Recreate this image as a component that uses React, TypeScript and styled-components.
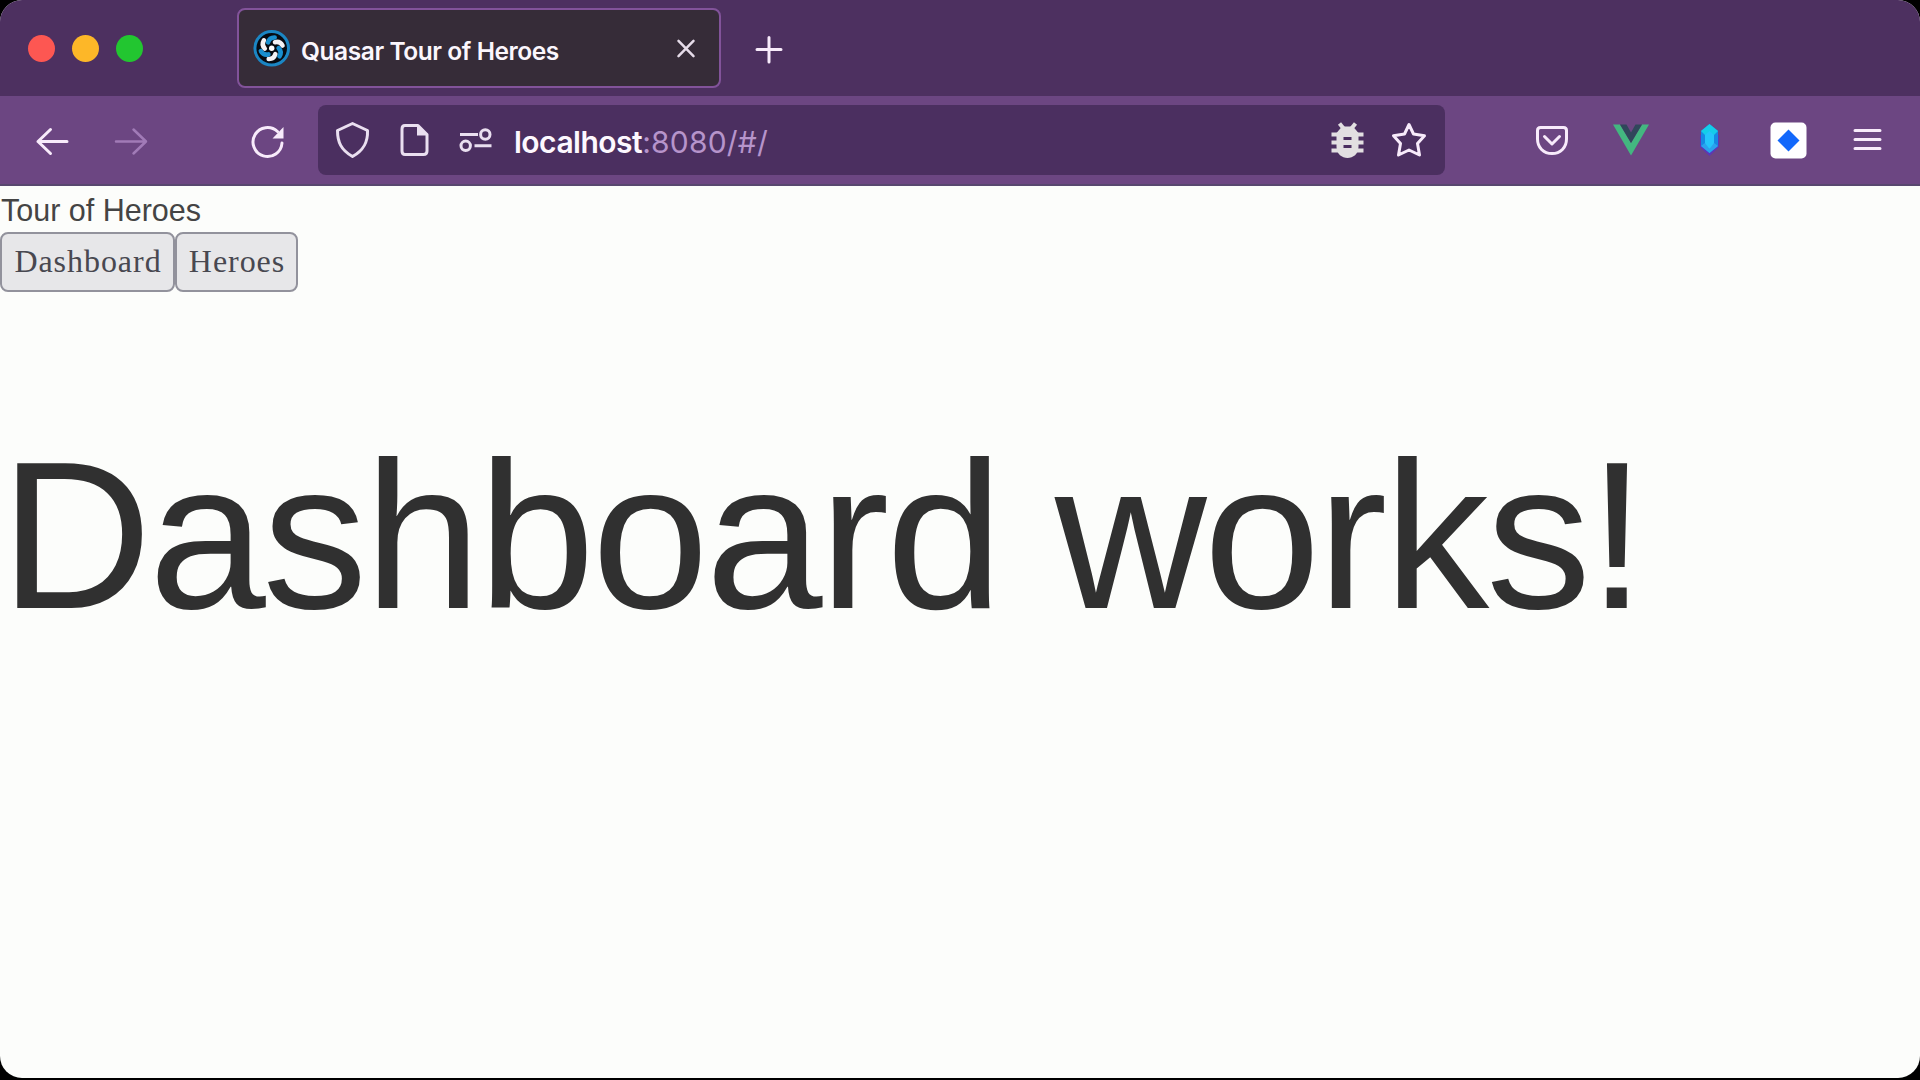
import React from "react";
import styled, { createGlobalStyle } from "styled-components";

const GlobalStyle = createGlobalStyle`
  html, body { margin: 0; padding: 0; background: #000; }
  *, *::before, *::after { box-sizing: border-box; }
`;

const Window = styled.div`
  width: 1920px;
  height: 1078px;
  display: flex;
  flex-direction: column;
  overflow: hidden;
  background: #fcfdfb;
  border-radius: 22px;
  font-family: Inter, "Liberation Sans", sans-serif;
`;

const Page = styled.div`
  height: 1080px;
  overflow: hidden;
  background: #000;
`;

const TabStrip = styled.header`
  flex: none;
  height: 96px;
  display: flex;
  align-items: center;
  padding-left: 28px;
  background: #4d3060;
`;

const Lights = styled.div`
  display: flex;
  gap: 17px;
  width: 209px;
`;

const Light = styled.span<{ $color: string }>`
  width: 27px;
  height: 27px;
  border-radius: 50%;
  background: ${(p) => p.$color};
`;

const Tab = styled.div`
  width: 484px;
  height: 80px;
  display: flex;
  align-items: center;
  padding: 0 13px 0 13px;
  border: 2px solid #82539a;
  border-radius: 8px;
  background: #362c38;
`;

const TabTitle = styled.span`
  flex: 1;
  padding: 5px 0 0 9px;
  color: #fbf6fd;
  font-size: 24.5px;
  font-weight: 600;
  line-height: 34px;
  letter-spacing: -0.43px;
  white-space: nowrap;
`;

const Toolbar = styled.nav`
  flex: none;
  height: 90px;
  display: flex;
  align-items: center;
  border-bottom: 2px solid #58476f;
  background: #6c4682;
`;

const Icon = styled.svg<{ $before?: number; $color?: string }>`
  flex: none;
  width: 40px;
  height: 40px;
  margin-left: ${(p) => p.$before ?? 0}px;
  color: ${(p) => p.$color ?? "#f8ebfb"};
  fill: none;
  stroke: currentColor;
  stroke-width: 3;
  stroke-linecap: round;
  stroke-linejoin: round;
`;

const AddressBar = styled.div`
  width: 1127px;
  height: 70px;
  display: flex;
  align-items: center;
  margin-left: 31px;
  padding-right: 16px;
  border-radius: 8px;
  background: #4b2f60;
`;

const Address = styled.span`
  flex: 1;
  padding: 4px 0 0 18px;
  color: #b694cb;
  font-size: 30px;
  line-height: 40px;
  letter-spacing: 0.2px;
  white-space: nowrap;
`;

const Host = styled.span`
  color: #fdf8ff;
  font-weight: 600;
  letter-spacing: -0.5px;
`;

const Content = styled.main`
  flex: 1;
  display: flex;
  flex-direction: column;
  align-items: flex-start;
  color: #303030;
  font-family: "Liberation Sans", Arial, sans-serif;
`;

const AppTitle = styled.div`
  height: 46px;
  padding: 2px 0 0 1px;
  color: #444;
  font-size: 30.5px;
  line-height: 44px;
`;

const Links = styled.div`
  display: flex;
`;

const LinkButton = styled.button<{ $width: number }>`
  width: ${(p) => p.$width}px;
  height: 60px;
  padding: 0 0 1px 1px;
  border: 2px solid #92929c;
  border-radius: 8px;
  background: #e7e7e9;
  color: #484850;
  font-family: Georgia, "Liberation Serif", serif;
  font-size: 32px;
  letter-spacing: 0.95px;
`;

const Heading = styled.h1`
  margin: 138px 0 0;
  font-size: 210.4px;
  font-weight: 400;
  line-height: 212px;
  letter-spacing: -0.01562em;
  white-space: nowrap;
`;

const blades = [0, 60, 120, 180, 240, 300];

const QuasarLogo = () => (
  <Icon viewBox="0 0 40 40">
    <circle cx="19.700" cy="20.300" r="16.800" fill="#070b12" stroke="#1b86c4" />
    {blades.map((angle, i) => (
      <path
        key={angle}
        d="M23 14.200Q28 13 30.500 17.500"
        transform={`rotate(${angle} 19.700 20.300)`}
        stroke={i % 2 ? "#188fd0" : "#f4f2f5"}
        strokeWidth="4.600"
      />
    ))}
    <circle cx="19.700" cy="20.300" r="2.700" fill="#fff" stroke="none" />
  </Icon>
);

export default function App() {
  return (
    <Page>
      <GlobalStyle />
      <Window>
        <TabStrip>
          <Lights>
            <Light $color="#fd5752" />
            <Light $color="#fdb728" />
            <Light $color="#22c630" />
          </Lights>
          <Tab>
            <QuasarLogo />
            <TabTitle>Quasar Tour of Heroes</TabTitle>
            <Icon viewBox="0 0 40 40" $color="#e6dce9">
              <path d="M12.500 12.800L27.500 28.200M27.500 12.800L12.500 28.200" strokeWidth="2.500" />
            </Icon>
          </Tab>
          <Icon viewBox="0 0 40 40" $before={28}>
            <path d="M20 9.500V34M8 21.500H32" />
          </Icon>
        </TabStrip>
        <Toolbar>
          <Icon viewBox="0 0 40 40" $before={32}>
            <path d="M35 21.500H6M18.500 9.500L6 21.500L18.500 33.500" />
          </Icon>
          <Icon viewBox="0 0 40 40" $before={39} $color="#a17bb7">
            <path d="M5 21.500H34M22.500 9.500L35 21.500L22.500 33.500" strokeWidth="2.500" />
          </Icon>
          <Icon viewBox="0 0 40 40" $before={96}>
            <path d="M35 23A14.500 14.500 0 1 1 30.500 11.500" />
            <path d="M36.500 7V18.500H25.500Z" fill="currentColor" stroke="none" />
          </Icon>
          <AddressBar>
            <Icon viewBox="0 0 40 40" $before={15} $color="#eadff0">
              <path d="M19.500 3.500L34.500 10.500C35 22 31 30 19.500 36.500C8 30 4.500 22 4.500 10.500Z" />
            </Icon>
            <Icon viewBox="0 0 40 40" $before={22} $color="#eadff0">
              <path d="M10 5.500H23L32 14.500V31Q32 34.500 28.500 34.500H10Q7 34.500 7 31V9Q7 5.500 10 5.500Z" />
              <path d="M22 5V15.500H32.500Z" fill="currentColor" stroke="none" />
            </Icon>
            <Icon viewBox="0 0 40 40" $before={21} $color="#eadff0">
              <path d="M4 14.500H22M18.500 25.800H35.500" strokeLinecap="butt" />
              <circle cx="29.300" cy="14.500" r="4.700" />
              <circle cx="9.700" cy="25.800" r="4.700" />
            </Icon>
            <Address>
              <Host>localhost</Host>:8080/#/
            </Address>
            <Icon viewBox="0 0 40 40" $color="#e2dfe1">
              <path d="M11.500 3.500L16 9M27.500 3.500L23 9" strokeLinecap="butt" strokeWidth="4" />
              <path d="M3.500 14.500H35.500M3.500 22.500H35.500M3.500 30.500H35.500" strokeLinecap="butt" strokeWidth="4" />
              <path
                d="M14 6.500H25L30.500 13V27C30.500 34 25 38 19.500 38S8.500 34 8.500 27V13Z"
                fill="currentColor"
                stroke="none"
              />
              <path d="M15.500 18.500H23.500M15.500 26.500H23.500" stroke="#4b2f60" strokeLinecap="butt" />
            </Icon>
            <Icon viewBox="0 0 40 40" $before={21}>
              <path d="M20 4.500L24.500 14L35.500 15.700L28.500 23.500L30.500 35L20 30L9.500 35L11.500 23.500L4.500 15.700L15.500 14Z" />
            </Icon>
          </AddressBar>
          <Icon viewBox="0 0 40 40" $before={87}>
            <path d="M8.500 7.500H31.500Q34.500 7.500 34.500 10.500V19C34.500 27.500 28.500 33.500 20 33.500S5.500 27.500 5.500 19V10.500Q5.500 7.500 8.500 7.500Z" />
            <path d="M12.500 16.500L20 24L27.500 16.500" />
          </Icon>
          <Icon viewBox="0 0 40 40" $before={39}>
            <g stroke="none">
              <path d="M2 4.500H9L20 23L31 4.500H38L20 35.500Z" fill="#43b780" />
              <path d="M9 4.500H15.500L20 12.500L24.500 4.500H31L20 23Z" fill="#30475b" />
            </g>
          </Icon>
          <Icon viewBox="0 0 40 40" $before={39}>
            <g stroke="none">
              <path d="M10 27L19.500 36L29 27V15H10Z" fill="#5c38b6" />
              <path d="M19.500 4L28 11V26L19.500 33L11 26V11Z" fill="#1689e2" />
              <path d="M19.500 4L28 11L24 15H15L11 11Z" fill="#14cde9" />
              <path d="M15 15L19.500 11L24 15V25L19.500 29L15 25Z" fill="#24c5fb" />
              <path d="M11 26L15 23L19.500 29L24 23L28 26L19.500 33Z" fill="#2ba2ed" />
            </g>
          </Icon>
          <Icon viewBox="0 0 40 40" $before={39}>
            <rect x="1.500" y="2.500" width="36" height="36" rx="5" fill="#fff" stroke="none" />
            <path d="M19.500 9.500L30.500 20.500L19.500 31.500L8.500 20.500Z" fill="#1268fb" stroke="none" />
          </Icon>
          <Icon viewBox="0 0 40 40" $before={39}>
            <path d="M7 10.500H32M7 19.500H32M7 28.500H32" />
          </Icon>
        </Toolbar>
        <Content>
          <AppTitle>Tour of Heroes</AppTitle>
          <Links>
            <LinkButton $width={175}>Dashboard</LinkButton>
            <LinkButton $width={123}>Heroes</LinkButton>
          </Links>
          <Heading>Dashboard works!</Heading>
        </Content>
      </Window>
    </Page>
  );
}
